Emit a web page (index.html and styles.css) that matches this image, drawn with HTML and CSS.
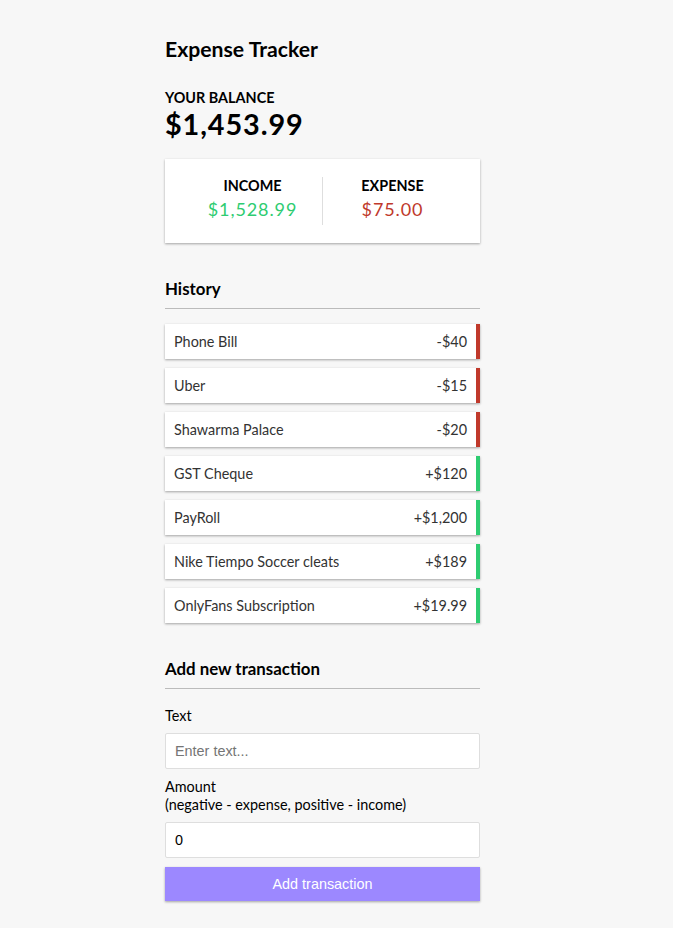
FILE: index.html
```html
<!DOCTYPE html>
<html lang="en">
<head>
<meta charset="UTF-8">
<title>Expense Tracker</title>
<link rel="stylesheet" href="styles.css">
</head>
<body>
<div class="container">
  <h2 class="title">Expense Tracker</h2>
  <h4 class="label-cap">Your Balance</h4>
  <h1 class="balance">$1,453.99</h1>

  <div class="inc-exp">
    <div class="inc-exp-col inc-exp-col--first">
      <h4 class="label-cap">Income</h4>
      <p class="money money--plus">$1,528.99</p>
    </div>
    <div class="inc-exp-col">
      <h4 class="label-cap">Expense</h4>
      <p class="money money--minus">$75.00</p>
    </div>
  </div>

  <h3 class="section-title">History</h3>
  <ul class="list">
    <li class="list-item list-item--minus"><span>Phone Bill</span><span>-$40</span></li>
    <li class="list-item list-item--minus"><span>Uber</span><span>-$15</span></li>
    <li class="list-item list-item--minus"><span>Shawarma Palace</span><span>-$20</span></li>
    <li class="list-item list-item--plus"><span>GST Cheque</span><span>+$120</span></li>
    <li class="list-item list-item--plus"><span>PayRoll</span><span>+$1,200</span></li>
    <li class="list-item list-item--plus"><span>Nike Tiempo Soccer cleats</span><span>+$189</span></li>
    <li class="list-item list-item--plus"><span>OnlyFans Subscription</span><span>+$19.99</span></li>
  </ul>

  <h3 class="section-title section-title--form">Add new transaction</h3>
  <form class="form">
    <div class="form-control">
      <label class="form-label" for="text">Text</label>
      <input class="form-input" type="text" id="text" placeholder="Enter text...">
    </div>
    <div class="form-control">
      <label class="form-label" for="amount">Amount <br>(negative - expense, positive - income)</label>
      <input class="form-input" type="number" id="amount" value="0">
    </div>
    <button class="btn" type="button">Add transaction</button>
  </form>
</div>
</body>
</html>
```
FILE: styles.css
```css
* {
  box-sizing: border-box;
}

body {
  margin: 0;
  background-color: #f7f7f7;
  font-family: "Lato", "Noto Sans", sans-serif;
  font-size: 14.4px;
}

.container {
  width: 315px;
  margin: 37px 0 27px 165px;
}

.title {
  font-size: 21.2px;
  line-height: 1.2;
  margin: 0 0 27px;
  color: #000;
}

.label-cap {
  margin: 0;
  font-size: 14.4px;
  line-height: 1.2;
  text-transform: uppercase;
  color: #000;
}

.balance {
  margin: 0;
  font-size: 28.8px;
  line-height: 1.2;
  letter-spacing: 0.9px;
  color: #000;
}

.inc-exp {
  display: flex;
  justify-content: space-between;
  background-color: #fff;
  box-shadow: 0 1px 3px rgba(0, 0, 0, 0.12), 0 1px 2px rgba(0, 0, 0, 0.24);
  padding: 18px;
  margin: 18px 0;
}

.inc-exp-col {
  flex: 1;
  text-align: center;
}

.inc-exp-col--first {
  border-right: 1px solid #dedede;
}

.money {
  font-size: 18px;
  line-height: 1.2;
  letter-spacing: 0.9px;
  margin: 4.5px 0;
}

.money--plus {
  color: #2ecc71;
}

.money--minus {
  color: #c0392b;
}

.section-title {
  font-size: 16.85px;
  line-height: 1.2;
  border-bottom: 1px solid #bbb;
  padding-bottom: 9px;
  margin: 36px 0 9px;
  color: #000;
}

.list {
  list-style-type: none;
  padding: 0;
  margin: 14.4px 0 36px;
}

.list-item {
  display: flex;
  justify-content: space-between;
  background-color: #fff;
  box-shadow: 0 1px 3px rgba(0, 0, 0, 0.12), 0 1px 2px rgba(0, 0, 0, 0.24);
  color: #333;
  line-height: 17px;
  padding: 9px;
  margin: 9px 0;
}

.list-item:first-child {
  margin-top: 0;
}

.list-item:last-child {
  margin-bottom: 0;
}

.list-item--plus {
  border-right: 4.5px solid #2ecc71;
}

.list-item--minus {
  border-right: 4.5px solid #c0392b;
}

.section-title--form {
  margin-top: 0;
}

.form {
  margin: 0;
}

.form-label {
  display: inline-block;
  margin: 9px 0;
  line-height: 1.2;
  color: #000;
}

.form-input {
  display: block;
  width: 100%;
  border: 1px solid #dedede;
  border-radius: 2px;
  font-family: "Liberation Sans", Arial, sans-serif;
  font-size: 14.4px;
  padding: 9px;
  color: #000;
  background: #fff;
}

.form-input::placeholder {
  color: #757575;
}

.btn {
  display: block;
  width: 100%;
  cursor: pointer;
  background-color: #9c88ff;
  box-shadow: 0 1px 3px rgba(0, 0, 0, 0.12), 0 1px 2px rgba(0, 0, 0, 0.24);
  color: #fff;
  border: 0;
  font-family: "Liberation Sans", Arial, sans-serif;
  font-size: 14.4px;
  padding: 9px;
  margin: 9px 0 0;
}
```
